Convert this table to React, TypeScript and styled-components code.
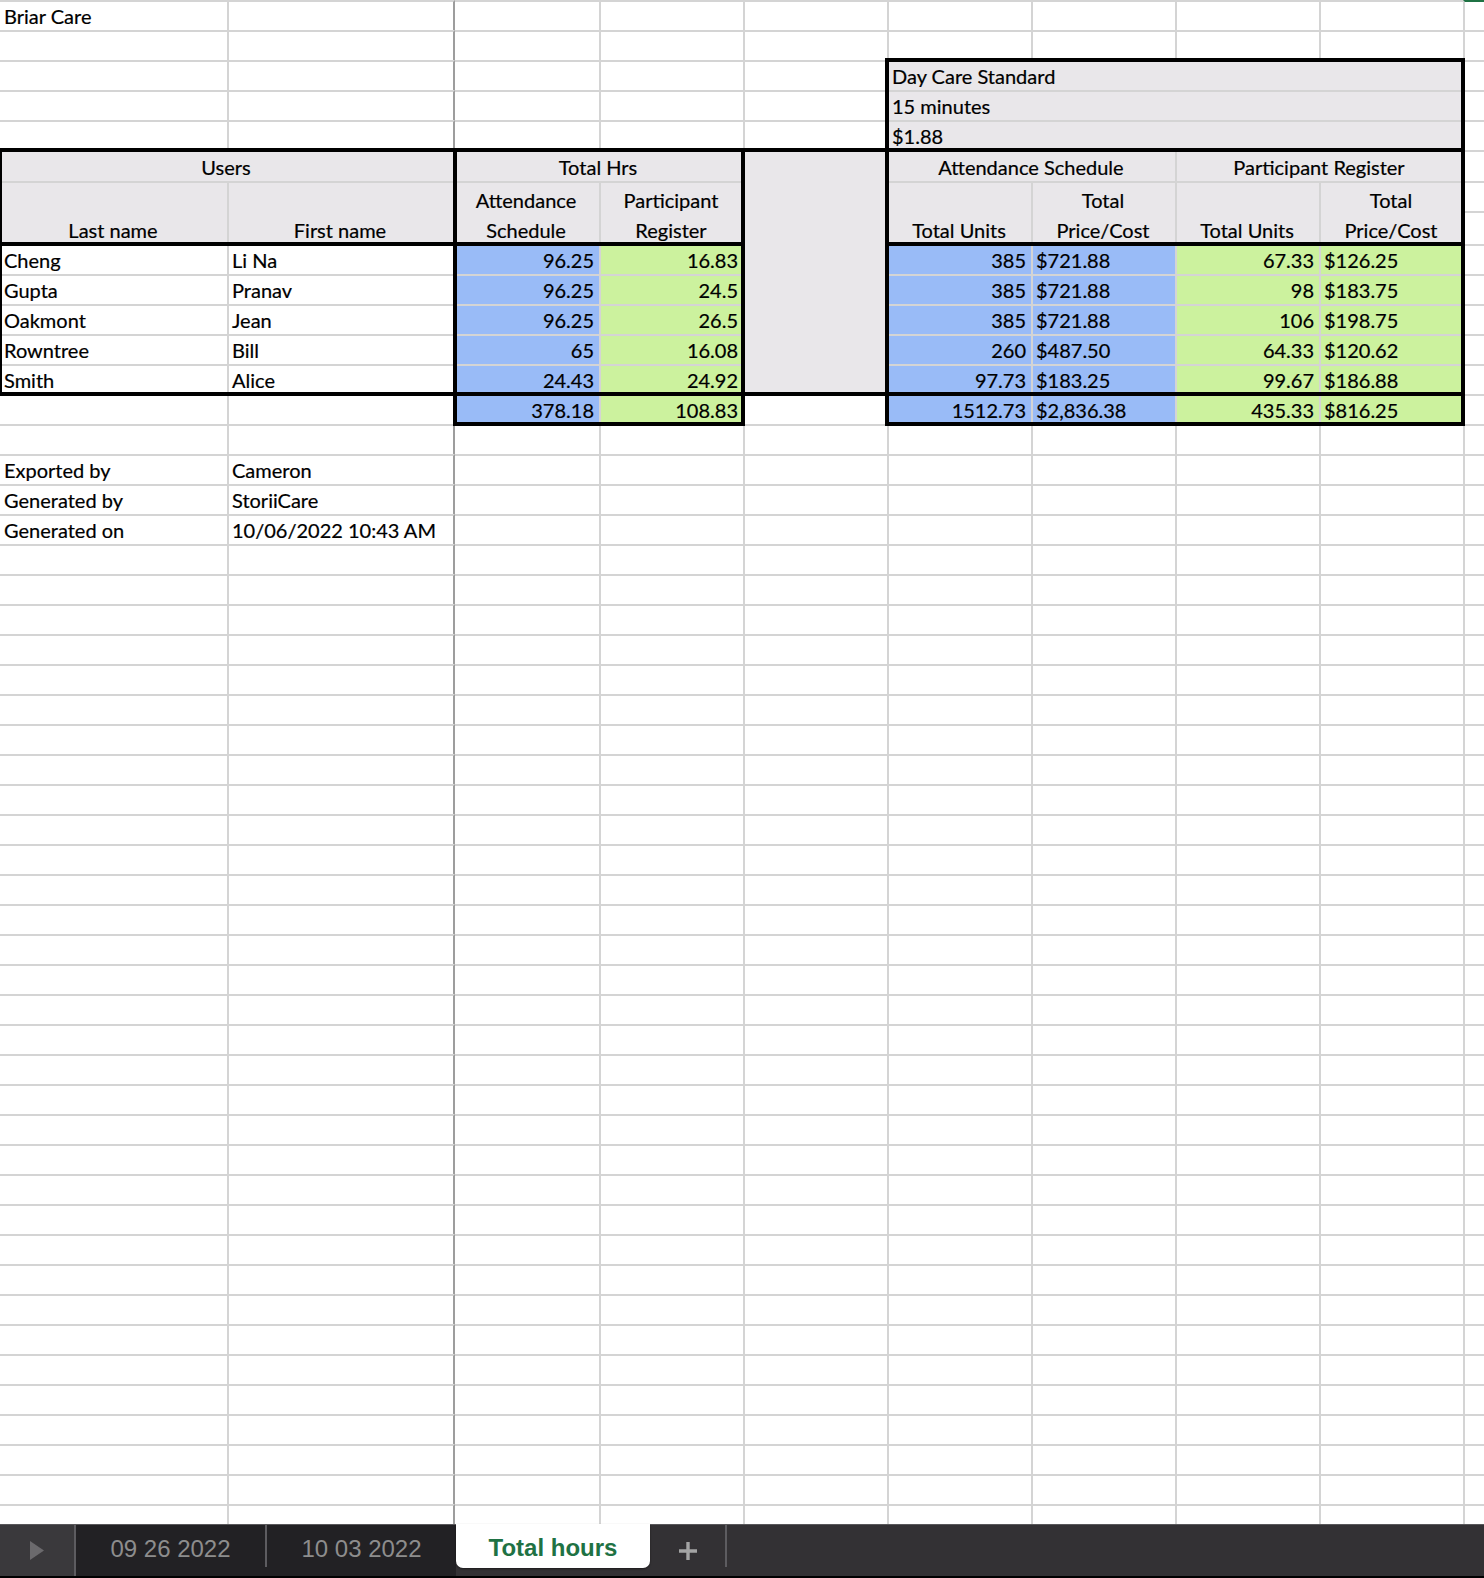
import React from 'react';
import styled, { createGlobalStyle } from 'styled-components';

const GRID = '#d4d4d4';
const FROZEN = '#9d9d9d';
const HEAD = '#e9e7ea';
const BLUE = '#99bbf7';
const GREEN = '#ccf29e';

const COLS = [227, 228, 144, 144, 144, 144, 144, 144, 144, 21];
const ROWS = [30, 30, 30, 30, 30, 31, 30, 33, ...Array(42).fill(30), 20];

const GlobalStyle = createGlobalStyle`
  html, body { margin: 0; padding: 0; background: #fff; }
  * { box-sizing: border-box; }
`;

const Page = styled.div`
  width: 1484px;
  height: 1578px;
  overflow: hidden;
  display: flex;
  flex-direction: column;
  background: #fff;
`;

const Sheet = styled.div`
  display: grid;
  grid-template-columns: ${COLS.map((w) => `${w}px`).join(' ')};
  grid-template-rows: ${ROWS.map((h) => `${h}px`).join(' ')};
  height: 1524px;
  overflow: hidden;
  font-family: Lato, 'Open Sans', sans-serif;
  font-size: 20px;
  color: #000;
  -webkit-text-stroke: 0.2px #000;
`;

type Align = 'left' | 'right' | 'center';

const Cell = styled.div<{
  $r: number;
  $c: number;
  $rs: number;
  $cs: number;
  $bg?: string;
  $align: Align;
  $top?: string;
}>`
  grid-row: ${(p) => p.$r} / span ${(p) => p.$rs};
  grid-column: ${(p) => p.$c} / span ${(p) => p.$cs};
  display: flex;
  align-items: flex-end;
  justify-content: ${(p) =>
    p.$align === 'right' ? 'flex-end' : p.$align === 'center' ? 'center' : 'flex-start'};
  background: ${(p) => p.$bg || '#fff'};
  border-top: 2px solid ${(p) => p.$top || GRID};
  border-left: ${(p) => (p.$c === 1 || p.$c === 3 ? 'none' : `2px solid ${GRID}`)};
  border-right: ${(p) => (p.$c + p.$cs - 1 === 2 ? `2px solid ${FROZEN}` : 'none')};
  padding: 0 5px 0 ${(p) => (p.$c === 1 ? 4 : 3)}px;
  line-height: 28px;
  white-space: nowrap;
  overflow: hidden;
`;

const Lines = styled.div`
  display: flex;
  flex-direction: column;
  align-items: center;
  line-height: 30px;
  margin-bottom: -1px;
`;

const Frame = styled.div<{ $r: number; $c: number; $rs: number; $cs: number }>`
  grid-row: ${(p) => p.$r} / span ${(p) => p.$rs};
  grid-column: ${(p) => p.$c} / span ${(p) => p.$cs};
  margin: -2px;
  border: 4px solid #000;
  z-index: 2;
  pointer-events: none;
`;

const TabBar = styled.div`
  height: 54px;
  display: flex;
  background: #333134;
  border-top: 1px solid #59585b;
  border-bottom: 2px solid #000;
  font-family: 'Liberation Sans', Arial, sans-serif;
  font-size: 24px;
`;

const NavBox = styled.div`
  width: 76px;
  display: flex;
  align-items: center;
  justify-content: center;
  background: #3a393c;
  border-right: 2px solid #5d5c60;
`;

const TabStrip = styled.div`
  display: flex;
  background: #222124;
`;

const Tab = styled.div`
  width: 189px;
  display: flex;
  align-items: center;
  justify-content: center;
  padding-bottom: 3px;
  color: #8d8d8d;
`;

const Divider = styled.div`
  width: 2px;
  height: 42px;
  align-self: flex-start;
  background: #5d5c60;
`;

const ActiveTab = styled.div`
  width: 194px;
  height: 44px;
  margin-top: -1px;
  padding-top: 4px;
  display: flex;
  align-items: center;
  justify-content: center;
  background: #fff;
  border-radius: 0 0 7px 7px;
  box-shadow: 0 1px 2px rgba(0, 0, 0, 0.45);
  color: #1f7244;
  font-weight: 700;
`;

const AddArea = styled.div`
  width: 75px;
  display: flex;
  align-items: center;
  justify-content: center;
`;

const Rest = styled.div`
  flex: 1;
`;

type Spec = {
  r: number;
  c: number;
  rs?: number;
  cs?: number;
  text?: string;
  lines?: [string, string];
  align?: Align;
  bg?: string;
  top?: string;
};

const people = [
  ['Cheng', 'Li Na', '96.25', '16.83', '385', '$721.88', '67.33', '$126.25'],
  ['Gupta', 'Pranav', '96.25', '24.5', '385', '$721.88', '98', '$183.75'],
  ['Oakmont', 'Jean', '96.25', '26.5', '385', '$721.88', '106', '$198.75'],
  ['Rowntree', 'Bill', '65', '16.08', '260', '$487.50', '64.33', '$120.62'],
  ['Smith', 'Alice', '24.43', '24.92', '97.73', '$183.25', '99.67', '$186.88'],
];

const specs: Spec[] = [
  { r: 1, c: 1, text: 'Briar Care' },
  { r: 1, c: 10, top: '#1f7244' },
  { r: 3, c: 6, cs: 4, text: 'Day Care Standard', bg: HEAD },
  { r: 4, c: 6, cs: 4, text: '15 minutes', bg: HEAD },
  { r: 5, c: 6, cs: 4, text: '$1.88', bg: HEAD },
  { r: 6, c: 1, cs: 2, text: 'Users', align: 'center', bg: HEAD },
  { r: 6, c: 3, cs: 2, text: 'Total Hrs', align: 'center', bg: HEAD },
  { r: 6, c: 5, rs: 8, bg: HEAD },
  { r: 6, c: 6, cs: 2, text: 'Attendance Schedule', align: 'center', bg: HEAD },
  { r: 6, c: 8, cs: 2, text: 'Participant Register', align: 'center', bg: HEAD },
  { r: 7, c: 1, rs: 2, text: 'Last name', align: 'center', bg: HEAD },
  { r: 7, c: 2, rs: 2, text: 'First name', align: 'center', bg: HEAD },
  { r: 7, c: 3, rs: 2, lines: ['Attendance', 'Schedule'], align: 'center', bg: HEAD },
  { r: 7, c: 4, rs: 2, lines: ['Participant', 'Register'], align: 'center', bg: HEAD },
  { r: 7, c: 6, rs: 2, text: 'Total Units', align: 'center', bg: HEAD },
  { r: 7, c: 7, rs: 2, lines: ['Total', 'Price/Cost'], align: 'center', bg: HEAD },
  { r: 7, c: 8, rs: 2, text: 'Total Units', align: 'center', bg: HEAD },
  { r: 7, c: 9, rs: 2, lines: ['Total', 'Price/Cost'], align: 'center', bg: HEAD },
  ...people.flatMap((p, i): Spec[] => {
    const r = 9 + i;
    return [
      { r, c: 1, text: p[0] },
      { r, c: 2, text: p[1] },
      { r, c: 3, text: p[2], align: 'right', bg: BLUE },
      { r, c: 4, text: p[3], align: 'right', bg: GREEN },
      { r, c: 6, text: p[4], align: 'right', bg: BLUE },
      { r, c: 7, text: p[5], bg: BLUE },
      { r, c: 8, text: p[6], align: 'right', bg: GREEN },
      { r, c: 9, text: p[7], bg: GREEN },
    ];
  }),
  { r: 14, c: 3, text: '378.18', align: 'right', bg: BLUE },
  { r: 14, c: 4, text: '108.83', align: 'right', bg: GREEN },
  { r: 14, c: 6, text: '1512.73', align: 'right', bg: BLUE },
  { r: 14, c: 7, text: '$2,836.38', bg: BLUE },
  { r: 14, c: 8, text: '435.33', align: 'right', bg: GREEN },
  { r: 14, c: 9, text: '$816.25', bg: GREEN },
  { r: 16, c: 1, text: 'Exported by' },
  { r: 16, c: 2, text: 'Cameron' },
  { r: 17, c: 1, text: 'Generated by' },
  { r: 17, c: 2, text: 'StoriiCare' },
  { r: 18, c: 1, text: 'Generated on' },
  { r: 18, c: 2, text: '10/06/2022 10:43 AM' },
];

const frames = [
  { r: 3, c: 6, rs: 3, cs: 4 },
  { r: 6, c: 1, rs: 3, cs: 2 },
  { r: 9, c: 1, rs: 5, cs: 2 },
  { r: 6, c: 3, rs: 3, cs: 2 },
  { r: 9, c: 3, rs: 5, cs: 2 },
  { r: 14, c: 3, rs: 1, cs: 2 },
  { r: 6, c: 5, rs: 8, cs: 1 },
  { r: 6, c: 6, rs: 3, cs: 4 },
  { r: 9, c: 6, rs: 5, cs: 4 },
  { r: 14, c: 6, rs: 1, cs: 4 },
];

function buildCells(): Spec[] {
  const occ = ROWS.map(() => COLS.map(() => false));
  specs.forEach((s) => {
    for (let r = s.r; r < s.r + (s.rs || 1); r++)
      for (let c = s.c; c < s.c + (s.cs || 1); c++) occ[r - 1][c - 1] = true;
  });
  const out: Spec[] = [...specs];
  ROWS.forEach((_, ri) =>
    COLS.forEach((__, ci) => {
      if (!occ[ri][ci]) out.push({ r: ri + 1, c: ci + 1 });
    })
  );
  return out;
}

const cells = buildCells();

export default function App() {
  return (
    <Page>
      <GlobalStyle />
      <Sheet>
        {cells.map((s) => (
          <Cell
            key={`${s.r}-${s.c}`}
            $r={s.r}
            $c={s.c}
            $rs={s.rs || 1}
            $cs={s.cs || 1}
            $bg={s.bg}
            $align={s.align || 'left'}
            $top={s.top}
          >
            {s.lines ? (
              <Lines>
                <span>{s.lines[0]}</span>
                <span>{s.lines[1]}</span>
              </Lines>
            ) : (
              s.text
            )}
          </Cell>
        ))}
        {frames.map((f) => (
          <Frame key={`f-${f.r}-${f.c}`} $r={f.r} $c={f.c} $rs={f.rs} $cs={f.cs} />
        ))}
      </Sheet>
      <TabBar>
        <NavBox>
          <svg width="16" height="21" viewBox="0 0 16 21">
            <path d="M1 1 L15 10.5 L1 20 Z" fill="#6b6a6d" />
          </svg>
        </NavBox>
        <TabStrip>
          <Tab>09 26 2022</Tab>
          <Divider />
          <Tab>10 03 2022</Tab>
        </TabStrip>
        <ActiveTab>Total hours</ActiveTab>
        <AddArea>
          <svg width="20" height="20" viewBox="0 0 20 20">
            <path d="M10 1 V19 M1 10 H19" stroke="#a4a4a4" strokeWidth="3.4" />
          </svg>
        </AddArea>
        <Divider />
        <Rest />
      </TabBar>
    </Page>
  );
}
